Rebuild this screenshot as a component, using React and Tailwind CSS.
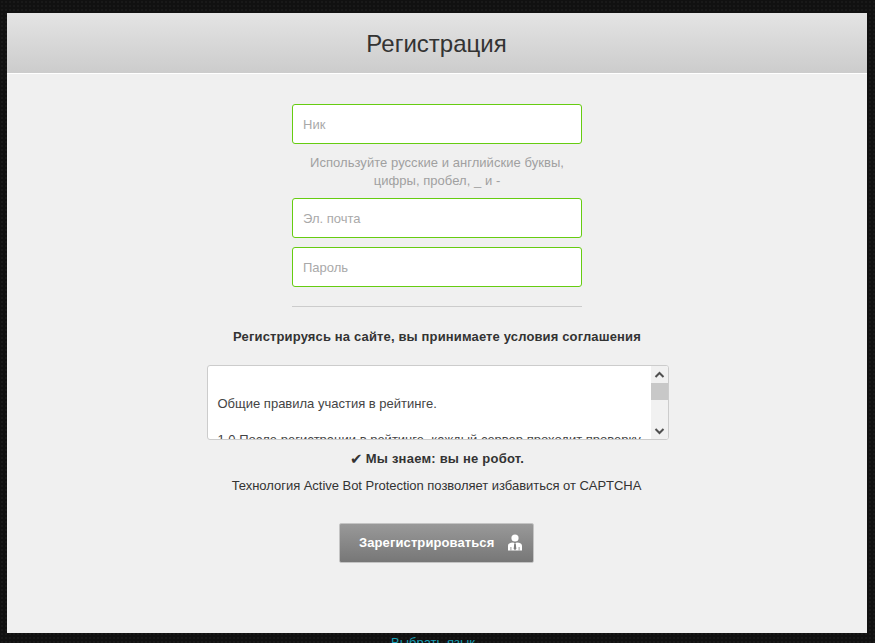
import React from "react";

const font = { fontFamily: '"Liberation Sans", Arial, sans-serif' };

function Field({ placeholder, className = "" }) {
  return (
    <div className={"w-[290px] h-10 shrink-0 rounded-[3px] border border-[#66cc11] bg-white pl-[10px] pt-[2px] flex items-center text-[13px] text-[#a9a9a9] " + className}>
      {placeholder}
    </div>
  );
}

function UserIcon() {
  return (
    <svg width="16" height="18" viewBox="0 0 16 18" className="ml-[13px] shrink-0">
      <circle cx="8" cy="4" r="3.6" fill="#fff" />
      <path d="M1 16.5V12C1 10 2.4 9.2 4 8.8L6.4 8.4L8 10L9.6 8.4L12 8.8C13.6 9.2 15 10 15 12V16.5H1Z" fill="#fff" />
      <path d="M7.2 10H8.8L9.3 14.5L8 16.5L6.7 14.5Z" fill="#7d7d7d" />
      <rect x="3.4" y="13" width="1" height="3.5" fill="#9a9a9a" />
      <rect x="11.6" y="13" width="1" height="3.5" fill="#9a9a9a" />
    </svg>
  );
}

export default function App() {
  return (
    <div
      style={font}
      className="h-[643px] w-[875px] overflow-hidden bg-[#111111] bg-[radial-gradient(#191919_1px,transparent_1px)] bg-[length:4px_4px] pt-[13px]"
    >
      <div className="mx-[7px] w-[860px] h-[620px] bg-[#f0f0f0] flex flex-col">
        <div className="h-[60px] shrink-0 bg-gradient-to-b from-[#e4e4e4] to-[#cccccc] flex items-center justify-center pt-[2px] pr-px text-[24px] text-[#333333]">
          Регистрация
        </div>
        <div className="h-px shrink-0 bg-white" />
        <div className="flex flex-col items-center pt-[30px]">
          <Field placeholder="Ник" />
          <div className="mt-[10px] w-[290px] text-center text-[13px] tracking-[0.05px] leading-[18px] text-[#a0a0a0] whitespace-nowrap flex flex-col items-center">
            <span>Используйте русские и английские буквы,</span>
            <span>цифры, пробел, _ и -</span>
          </div>
          <Field placeholder="Эл. почта" className="mt-[8px]" />
          <Field placeholder="Пароль" className="mt-[9px]" />
          <div className="mt-[19px] h-px w-[290px] bg-[#cccccc]" />
          <div className="mt-[21px] text-[13px] tracking-[0.145px] leading-[18px] font-bold text-[#333333]">
            Регистрируясь на сайте, вы принимаете условия соглашения
          </div>
          <div className="mt-[19px] ml-px w-[462px] h-[75px] rounded-[3px] border border-[#cccccc] bg-white flex overflow-hidden">
            <div className="flex-1 overflow-hidden pl-[10px] pt-[29px] text-[13px] leading-[18px] text-[#444444] whitespace-nowrap">
              <p>Общие правила участия в рейтинге.</p>
              <p className="mt-[18px]">1.0 После регистрации в рейтинге, каждый сервер проходит проверку</p>
            </div>
            <div className="w-[17px] shrink-0 bg-[#f1f1f1] flex flex-col">
              <div className="h-[17px] flex items-center justify-center">
                <svg width="11" height="8" viewBox="0 0 11 8"><path d="M1.5 6L5.5 2L9.5 6" fill="none" stroke="#505050" strokeWidth="2" /></svg>
              </div>
              <div className="h-[17px] bg-[#c8c8c8]" />
              <div className="flex-1" />
              <div className="h-[17px] flex items-center justify-center">
                <svg width="11" height="8" viewBox="0 0 11 8"><path d="M1.5 2L5.5 6L9.5 2" fill="none" stroke="#505050" strokeWidth="2" /></svg>
              </div>
            </div>
          </div>
          <div className="mt-[10px] text-[13px] tracking-[0.22px] leading-[18px] font-bold text-[#333333] flex items-center gap-[3px]">
            <span className="font-['DejaVu_Sans'] font-normal text-[15px]">✔</span>
            <span>Мы знаем: вы не робот.</span>
          </div>
          <div className="mt-[9px] pr-px text-[13px] tracking-[-0.03px] leading-[18px] text-[#333333]">
            Технология Active Bot Protection позволяет избавиться от CAPTCHA
          </div>
          <div className="mt-[28px] -ml-px w-[195px] h-10 rounded-[2px] border border-[#c4c4c4] bg-gradient-to-b from-[#999999] to-[#777777] flex items-center pl-[19px] text-[13px] tracking-[0.1px] font-bold text-white">
            Зарегистрироваться
            <UserIcon />
          </div>
        </div>
      </div>
      <div className="mt-px pr-[9px] text-center text-[13px] leading-[18px] text-[#1a9fb5]">Выбрать язык</div>
    </div>
  );
}
